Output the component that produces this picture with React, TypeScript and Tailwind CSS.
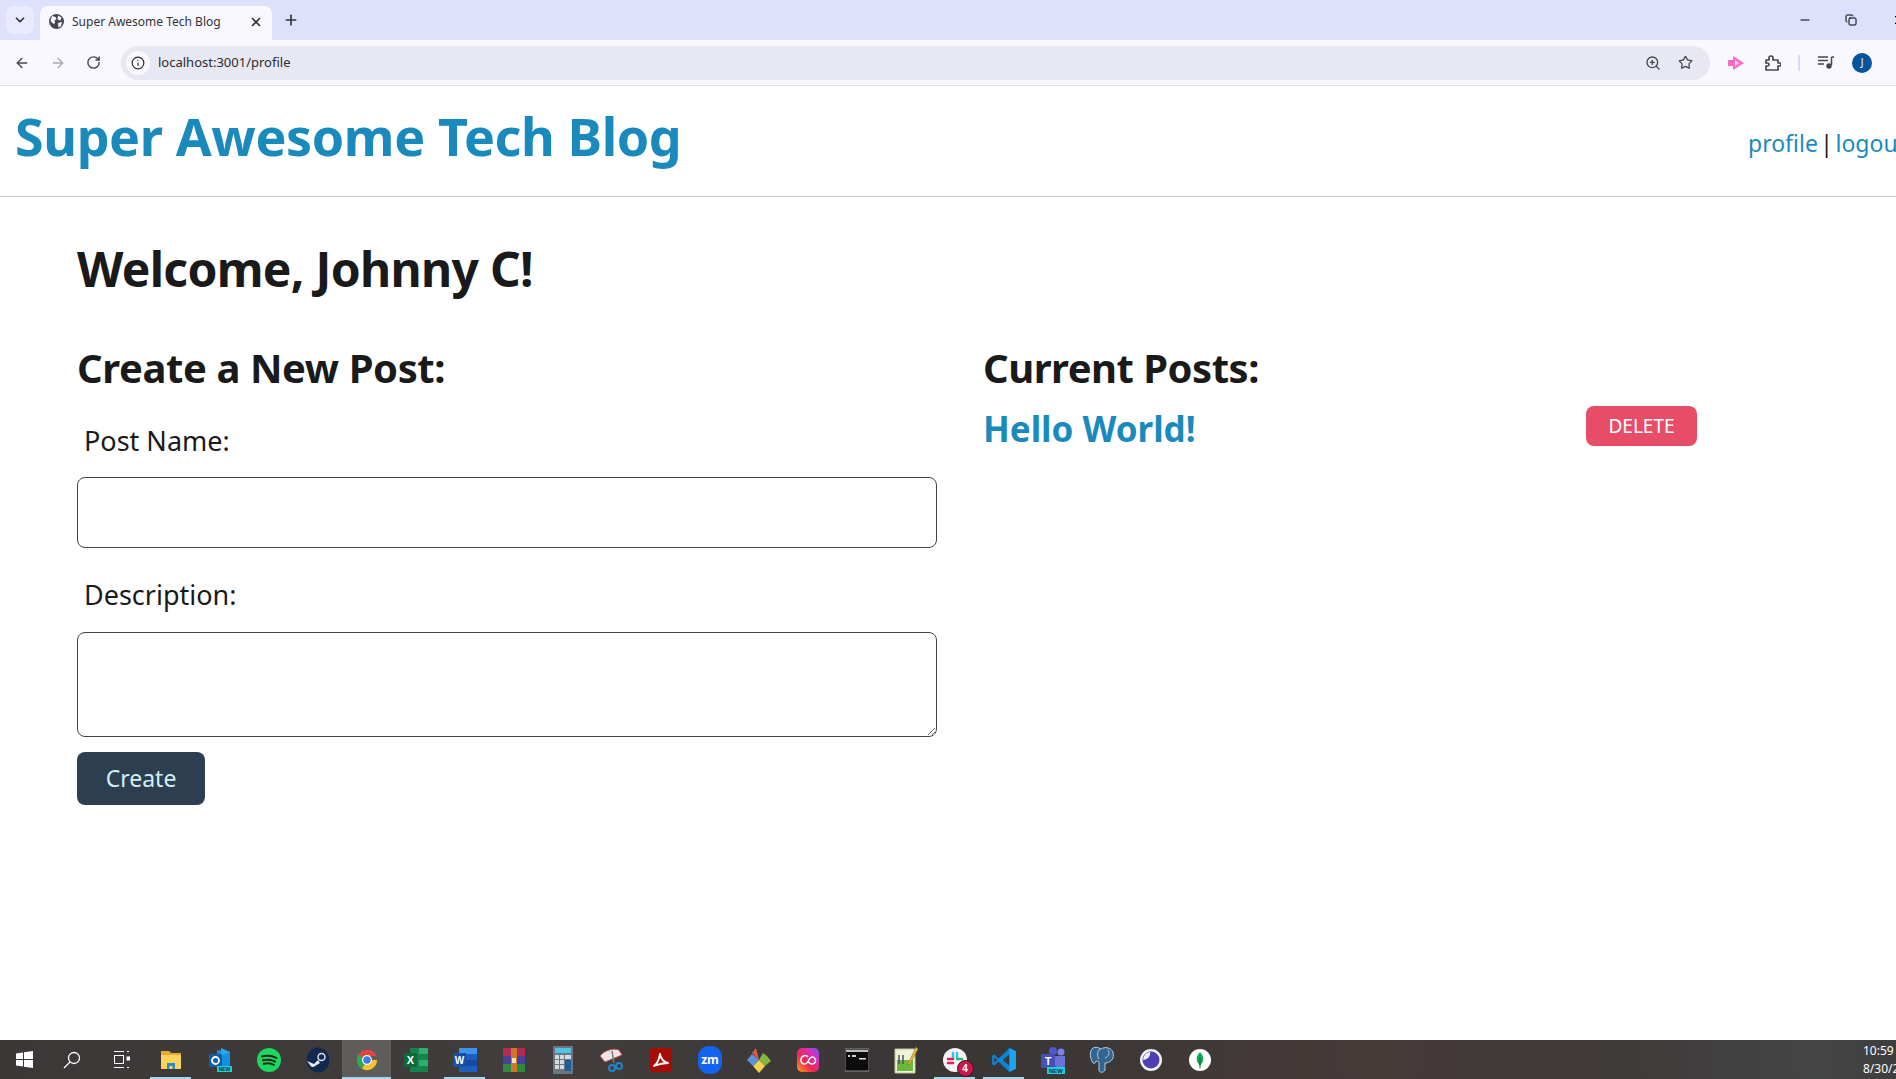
import React from 'react';
import { ArrowLeft, ArrowRight, ChevronDown, Copy, Info, Minus, Plus, RotateCw, Star, X, ZoomIn } from 'lucide-react';

const Slot = ({ active, open, children }: { active?: boolean; open?: boolean; children: React.ReactNode }) => (
  <div className={`relative flex h-full w-[49px] shrink-0 items-center justify-center ${active ? 'bg-[#5f5c5c]' : ''}`}>
    {children}
    {open && <div className={`absolute bottom-0 h-[2px] bg-[#a9d4ee] ${active ? 'inset-x-0' : 'inset-x-[4px]'}`} />}
  </div>
);

function TaskIcons() {
  return (
    <>
      <Slot open>
        <svg width="24" height="24" viewBox="0 0 24 24"><path d="M2 3h8l2 2h10v16H2z" fill="#e8a92e" /><path d="M2 7h20v14H2z" fill="#fbd35f" /><path d="M8 21v-6h8v6h-2.500v-3h-3v3z" fill="#2f88c9" /></svg>
      </Slot>
      <Slot>
        <svg width="26" height="26" viewBox="0 0 26 26"><path d="M10 3l13 2v16l-13 2z" fill="#1490df" /><path d="M14 1l9 4-9 4z" fill="#28a8ea" /><rect x="2" y="7" width="13" height="13" rx="1" fill="#0f5fa8" /><circle cx="8.500" cy="13.500" r="3.500" fill="none" stroke="#fff" strokeWidth="1.800" /><rect x="10" y="19" width="15" height="6" fill="#1fd0d8" /><text x="17.500" y="24" fontSize="5" fontWeight="700" textAnchor="middle" fill="#134" fontFamily="Liberation Sans, sans-serif">NEW</text></svg>
      </Slot>
      <Slot>
        <svg width="24" height="24" viewBox="0 0 24 24"><circle cx="12" cy="12" r="12" fill="#1ed760" /><path d="M5 8.500c5-1.500 10-1 14.500 1.500M6 12.300c4.500-1.200 8.500-.8 12 1.300M6.800 15.800c3.800-1 7-.6 10 1" fill="none" stroke="#10281a" strokeWidth="2" strokeLinecap="round" /></svg>
      </Slot>
      <Slot>
        <svg width="24" height="26" viewBox="0 0 24 26"><ellipse cx="12" cy="13" rx="11.500" ry="12.500" fill="#12294f" /><circle cx="15.500" cy="10" r="3.500" fill="none" stroke="#d8e2ee" strokeWidth="1.500" /><path d="M1 14l7 3 4-4 2 3-5 3a3 3 0 0 1-5-1z" fill="#e4ebf3" /></svg>
      </Slot>
      <Slot active open>
        <svg width="24" height="24" viewBox="0 0 24 24"><path d="M12 12L3.400 7A10 10 0 0 1 21.500 8H12z" fill="#e5443a" /><path d="M12 12l-5 8.700A10 10 0 0 1 3.400 6.500z" fill="#34a853" /><path d="M12 12h10a10 10 0 0 1-15 8.700z" fill="#fbc02d" /><circle cx="12" cy="12" r="5" fill="#fff" /><circle cx="12" cy="12" r="3.800" fill="#3b7cf0" /></svg>
      </Slot>
      <Slot>
        <svg width="24" height="26" viewBox="0 0 24 26"><path d="M6 1h18v24H6z" fill="#14844c" /><path d="M15 1h9v6h-9zM15 13h9v6h-9z" fill="#2eae6c" /><rect x="0" y="6" width="13" height="14" fill="#0d6a3a" /><text x="6.500" y="17" fontSize="11" fontWeight="700" textAnchor="middle" fill="#fff" fontFamily="Liberation Sans, sans-serif">X</text></svg>
      </Slot>
      <Slot open>
        <svg width="24" height="26" viewBox="0 0 24 26"><path d="M6 1h18v24H6z" fill="#1d5fc0" /><path d="M6 1h18v6H6z" fill="#3f94ea" /><path d="M6 13h18v6H6z" fill="#174a9e" /><rect x="0" y="6" width="13" height="14" fill="#1a4fa8" /><text x="6.500" y="17" fontSize="10" fontWeight="700" textAnchor="middle" fill="#fff" fontFamily="Liberation Sans, sans-serif">W</text></svg>
      </Slot>
      <Slot>
        <svg width="24" height="26" viewBox="0 0 24 26"><rect x="1" y="1" width="22" height="8" fill="#b52a52" /><rect x="1" y="9" width="22" height="8" fill="#43439c" /><rect x="1" y="17" width="22" height="8" fill="#2c8b3c" /><rect x="9" y="1" width="6" height="24" fill="#c9782c" /><rect x="10" y="11" width="4" height="5" fill="#f0e2c0" /></svg>
      </Slot>
      <Slot>
        <svg width="20" height="28" viewBox="0 0 20 28"><rect width="20" height="28" rx="1" fill="#6c7680" /><rect x="2" y="2" width="16" height="5" fill="#4fc3e8" /><path d="M2 9h4v4H2zM7 9h4v4H7zM2 14h4v4H2zM7 14h4v4H7zM2 19h4v4H2zM7 19h4v4H7z" fill="#d5dade" /><rect x="12" y="9" width="6" height="4" fill="#d5dade" /><rect x="12" y="14" width="6" height="11" fill="#1f5d96" /></svg>
      </Slot>
      <Slot>
        <svg width="26" height="26" viewBox="0 0 26 26"><path d="M1 9c4-6 14-8 19-6l3 5-17 7z" fill="#ece7e4" stroke="#c04a4a" strokeWidth="1" /><path d="M13 4l2 12" stroke="#777" strokeWidth="1.500" /><circle cx="20" cy="19" r="3" fill="none" stroke="#1b87c9" strokeWidth="2" /><circle cx="13" cy="21" r="3" fill="none" stroke="#1b87c9" strokeWidth="2" /></svg>
      </Slot>
      <Slot>
        <svg width="22" height="24" viewBox="0 0 22 24"><rect width="22" height="24" rx="3" fill="#a80c06" /><path d="M4 18c3-2 5-6 6-12 1 5 3 8 8 9-5 0-9 1-14 3z" fill="none" stroke="#fff" strokeWidth="1.800" strokeLinejoin="round" /></svg>
      </Slot>
      <Slot>
        <svg width="24" height="28" viewBox="0 0 24 28"><rect width="24" height="28" rx="11" fill="#1464f0" /><text x="12" y="18" fontSize="12" fontWeight="700" textAnchor="middle" fill="#fff" fontFamily="Noto Sans, sans-serif">zm</text></svg>
      </Slot>
      <Slot>
        <svg width="26" height="28" viewBox="0 0 26 28"><path d="M13 14L6 7l4-5z" fill="#d95b4c" /><path d="M13 14l4-7 4 3 4 5-6 5z" fill="#86b53c" /><path d="M13 14l6 6-6 7-6-7z" fill="#f0d04e" /><path d="M13 14l-6 6-6-6 5-6z" fill="#5d93d6" /></svg>
      </Slot>
      <Slot>
        <svg width="22" height="24" viewBox="0 0 22 24"><defs><linearGradient id="cc" x1="0" y1="1" x2="1" y2="0"><stop offset="0" stopColor="#f9a01b" /><stop offset="0.4" stopColor="#f0264f" /><stop offset="0.75" stopColor="#d331c5" /><stop offset="1" stopColor="#5b5ff0" /></linearGradient></defs><rect width="22" height="24" rx="5" fill="url(#cc)" /><path d="M11 9a4 4 0 0 0-7 3 3.500 3.500 0 0 0 4 4c3 0 4-7 7-7a3.500 3.500 0 0 1 0 7c-2 0-3-1-4-3" fill="none" stroke="#fff" strokeWidth="1.500" /></svg>
      </Slot>
      <Slot>
        <svg width="24" height="24" viewBox="0 0 24 24"><rect y="1" width="24" height="22" fill="#0c0c0c" stroke="#8b8b8b" /><rect x="1" y="2" width="22" height="2" fill="#bfbfbf" /><path d="M3 7h2v2H3zM7 7h4v2H7z" fill="#d0d0d0" /><rect x="14" y="10" width="7" height="1.500" fill="#e0e0e0" /></svg>
      </Slot>
      <Slot>
        <svg width="24" height="28" viewBox="0 0 24 28"><path d="M1 3h20v24H1z" fill="#eef3da" stroke="#bcc89a" /><rect x="3" y="14" width="16" height="11" fill="#6cb63a" /><path d="M5 9v9M9 9v9" stroke="#555" strokeWidth="1.500" /><path d="M22 1l-7 15-2 3 3-1 8-15z" fill="#e9b93a" stroke="#8a6a20" strokeWidth="0.500" /></svg>
      </Slot>
      <Slot open>
        <div className="relative h-[24px] w-[24px]">
          <svg width="24" height="24" viewBox="0 0 24 24"><circle cx="12" cy="12" r="12" fill="#f4f2f2" /><path d="M10 5v5M14 5v5" stroke="#36c5f0" strokeWidth="2.500" strokeLinecap="round" /><path d="M5 11h5M5 15h5" stroke="#e01e5a" strokeWidth="2.500" strokeLinecap="round" /><path d="M14 11h5" stroke="#2eb67d" strokeWidth="2.500" strokeLinecap="round" /></svg>
          <span className="absolute -bottom-[5px] -right-[7px] flex h-[17px] w-[17px] items-center justify-center rounded-full border border-[#3c1020] bg-[#c8174a] font-['Liberation_Sans',sans-serif] text-[10px] font-bold text-white">4</span>
        </div>
      </Slot>
      <Slot open>
        <svg width="26" height="26" viewBox="0 0 24 24"><path d="M17 1l6 3v16l-6 3L7 13.500 3 17l-2-1V8l2-1 4 3.500z" fill="#0a84d6" /><path d="M17 7l-6 5 6 5z" fill="#3c3838" /><path d="M17 1l6 3v16l-6 3z" fill="#1fa3ec" /><path d="M3 9.500L5.500 12 3 14.500z" fill="#3c3838" /></svg>
      </Slot>
      <Slot>
        <svg width="26" height="28" viewBox="0 0 26 28"><circle cx="21" cy="6" r="3.500" fill="#7b83eb" /><circle cx="13" cy="5" r="4" fill="#5059c9" /><path d="M10 10h15v9a5 5 0 0 1-10 0h-5z" fill="#6a72d8" /><rect x="1" y="8" width="14" height="14" rx="1" fill="#464eb8" /><text x="8" y="19" fontSize="11" fontWeight="700" textAnchor="middle" fill="#fff" fontFamily="Liberation Sans, sans-serif">T</text><rect x="7" y="21" width="18" height="7" fill="#1fd0d8" /><text x="16" y="27" fontSize="6" fontWeight="700" textAnchor="middle" fill="#134" fontFamily="Liberation Sans, sans-serif">NEW</text></svg>
      </Slot>
      <Slot>
        <svg width="26" height="28" viewBox="0 0 26 28"><path d="M4 2c-4 3-3 11 0 15 1 1 3 0 3-2 2 0 3 0 3 2v7c0 3 5 3 6 0v-7c3 0 6-1 8-5 1-4 0-9-5-10-3-1-5 0-7 1-3-2-6-2-8-1z" fill="#32658f" stroke="#b8cce0" strokeWidth="1" /><path d="M11 3c-3 3-3 7-1 10M19 4c2 3 1 6-3 8" fill="none" stroke="#b8cce0" /></svg>
      </Slot>
      <Slot>
        <svg width="22" height="22" viewBox="0 0 22 22"><circle cx="11" cy="11" r="11" fill="#f2f2f6" /><circle cx="11" cy="11" r="8.500" fill="#4f3fb2" /><path d="M10 3a8 8 0 0 0-7 8c3 0 8-3 7-8z" fill="#f2f2f6" /></svg>
      </Slot>
      <Slot>
        <svg width="22" height="22" viewBox="0 0 22 22"><circle cx="11" cy="11" r="11" fill="#fff" /><path d="M11 3c3 3 4 6 3 9-.5 2-2 3-3 5-1-2-2.500-3-3-5-1-3 0-6 3-9z" fill="#13aa52" /><path d="M11 8v11" stroke="#0b6b34" /></svg>
      </Slot>
    </>
  );
}

export default function App() {
  return (
    <div className="flex h-[1079px] w-[1896px] flex-col overflow-hidden bg-white font-['Noto_Sans',sans-serif] text-[#1a1a1a]">
      {/* browser chrome */}
      <div className="flex h-[40px] shrink-0 items-end bg-[#dde1fb] pl-[6px]">
        <div className="mb-[6px] flex h-[28px] w-[28px] items-center justify-center rounded-lg bg-[#e9ebfc]">
          <ChevronDown size={14} strokeWidth={3} className="text-[#33343a]" />
        </div>
        <div className="ml-[6px] flex h-[34px] w-[232px] items-center rounded-t-lg bg-[#f8f8fe] pb-[3px] pl-[9px] pr-[9px]">
          <svg width="15" height="15" viewBox="0 0 15 15"><circle cx="7.500" cy="7.500" r="7.500" fill="#45474d" /><path d="M3 2l3.500 1 1 2-2 1.500L6 9 4.500 10 1.500 7zM9 1.500l3.500 2-1 3-3-1zM9 9l4-1-1 4-2.500 1.500z" fill="#f8f8fe" /></svg>
          <span className="ml-[8px] flex-1 text-[12px] text-[#33343a]">Super Awesome Tech Blog</span>
          <X size={14} strokeWidth={3} className="text-[#33343a]" />
        </div>
        <Plus size={16} strokeWidth={2.5} className="mb-[12px] ml-[11px] text-[#33343a]" />
        <div className="flex-1" />
        <div className="mb-[13px] -mr-[10px] flex items-center gap-[33px]">
          <Minus size={14} className="text-black" />
          <Copy size={12} className="text-black" />
          <X size={14} className="ml-[2px] text-black" />
        </div>
      </div>
      <div className="flex h-[46px] shrink-0 items-center border-b border-[#e0e0e8] bg-[#f8f8fe] pl-[14px]">
        <ArrowLeft size={16} strokeWidth={2} className="text-[#45474d]" />
        <ArrowRight size={16} strokeWidth={2} className="ml-[20px] text-[#a9abb2]" />
        <RotateCw size={15} strokeWidth={2.2} className="ml-[20px] text-[#45474d]" />
        <div className="ml-[20px] flex h-[34px] w-[1589px] items-center rounded-full bg-[#e7e8f2] pl-[5px] pr-[17px]">
          <div className="flex h-[24px] w-[24px] items-center justify-center rounded-full bg-[#f8f8fe]">
            <Info size={14} strokeWidth={2} className="text-[#2b2c30]" />
          </div>
          <span className="ml-[8px] flex-1 text-[13px] text-[#2b2c30]">localhost:3001/profile</span>
          <ZoomIn size={16} strokeWidth={2} className="text-[#45474d]" />
          <Star size={15} strokeWidth={2} className="ml-[17px] text-[#45474d]" />
        </div>
        <svg width="16" height="14" viewBox="0 0 16 14" className="ml-[18px]"><path d="M0 4h5V0l11 7-11 7v-4H0z" fill="#ff69c0" /><path d="M7 4l4 3-4 3z" fill="#ffd7ee" /></svg>
        <svg width="16" height="16" viewBox="0 0 16 16" className="ml-[21px]"><path d="M1 5h3V3a2 2 0 0 1 4 0v2h5v3h1.500a1.500 1.500 0 0 1 0 3H13v4H1v-4h1.500a1.500 1.500 0 0 0 0-3H1z" fill="none" stroke="#45474d" strokeWidth="1.700" strokeLinejoin="round" /></svg>
        <div className="ml-[17px] h-[16px] w-[2px] bg-[#d9dcf8]" />
        <svg width="16" height="13" viewBox="0 0 16 13" className="ml-[18px]"><path d="M0 1h10M0 4.500h10M0 8h6" stroke="#45474d" strokeWidth="1.500" /><path d="M13.500 1v8" stroke="#45474d" strokeWidth="1.500" /><path d="M13.500 1H16" stroke="#45474d" strokeWidth="1.500" /><circle cx="11" cy="10" r="2.700" fill="#45474d" /></svg>
        <div className="ml-[18px] flex h-[20px] w-[20px] items-center justify-center rounded-full bg-[#04559c] text-[10px] text-white">J</div>
      </div>

      {/* app header */}
      <header className="flex h-[111px] shrink-0 items-center border-b border-[#c8c8c8] pl-[15px]">
        <a className="-mt-[10px] text-[52px] font-bold tracking-[-0.4px] text-[#1a8abd]">Super Awesome Tech Blog</a>
        <div className="ml-auto mt-[4px] w-[148px] overflow-hidden whitespace-nowrap text-[23px] text-[#1a8abd] [word-spacing:-3.5px]">
          profile <span className="text-[#1a1a1a]">|</span> logout
        </div>
      </header>

      <main className="min-h-0 flex-1 px-[77px]">
        <h1 className="mt-[40px] text-[48px] font-bold leading-[64px] tracking-[-0.7px]">Welcome, Johnny C!</h1>
        <div className="mt-[40px] flex gap-[46px]">
          <section className="w-[860px]">
            <h2 className="text-[40px] font-bold leading-[54px] tracking-[-0.4px]">Create a New Post:</h2>
            <label className="ml-[7px] mt-[27px] block text-[27px] leading-[38px]">Post Name:</label>
            <input className="mt-[17px] block h-[71px] w-full rounded-lg border border-[#444]" />
            <label className="ml-[7px] mt-[28px] block text-[27px] leading-[38px]">Description:</label>
            <textarea className="mt-[18px] block h-[105px] w-full rounded-lg border border-[#444]" />
            <button className="mt-[15px] h-[53px] w-[128px] rounded-lg bg-[#2c3e50] text-[23px] text-[#d3eef5]">Create</button>
          </section>
          <section className="w-[714px]">
            <h2 className="text-[40px] font-bold leading-[54px] tracking-[-0.5px]">Current Posts:</h2>
            <div className="mt-[11px] flex items-start justify-between">
              <a className="text-[35px] font-bold leading-[46px] text-[#1a8abd]">Hello World!</a>
              <button className="h-[40px] w-[111px] rounded-lg bg-[#e84d67] text-[19px] text-white">DELETE</button>
            </div>
          </section>
        </div>
      </main>

      {/* windows taskbar */}
      <footer className="flex h-[39px] shrink-0 items-center bg-[linear-gradient(90deg,#3c3838_0%,#423c3c_30%,#393636_50%,#453a38_72%,#3f3b3a_86%,#444546_96%,#3e3e3e_100%)]">
        <div className="flex w-[48px] justify-center">
          <svg width="17" height="17" viewBox="0 0 17 17"><path d="M0 2.500l7-1v6.500H0zM8 1.300L17 0v8H8zM0 9h7v6.500l-7-1zM8 9h9v8l-9-1.300z" fill="#fff" /></svg>
        </div>
        <div className="flex w-[48px] justify-center">
          <svg width="18" height="18" viewBox="0 0 18 18" fill="none" stroke="#fff" strokeWidth="1.300"><circle cx="11" cy="7" r="5.500" /><path d="M7 11l-6 6" /></svg>
        </div>
        <div className="flex w-[50px] justify-center">
          <svg width="17" height="17" viewBox="0 0 17 17" fill="none" stroke="#fff"><path d="M1 .5h10M1 16.500h10" /><rect x="1.500" y="4.500" width="9" height="8" /><path d="M14 .5h2M14 16.500h2" /><rect x="14" y="6" width="2.500" height="3" fill="#fff" /></svg>
        </div>
        <TaskIcons />
        <div className="ml-auto w-[33px] shrink-0 overflow-hidden whitespace-nowrap text-[12px] leading-[18px] text-white">
          <div>10:59 PM</div>
          <div>8/30/2024</div>
        </div>
      </footer>
    </div>
  );
}
